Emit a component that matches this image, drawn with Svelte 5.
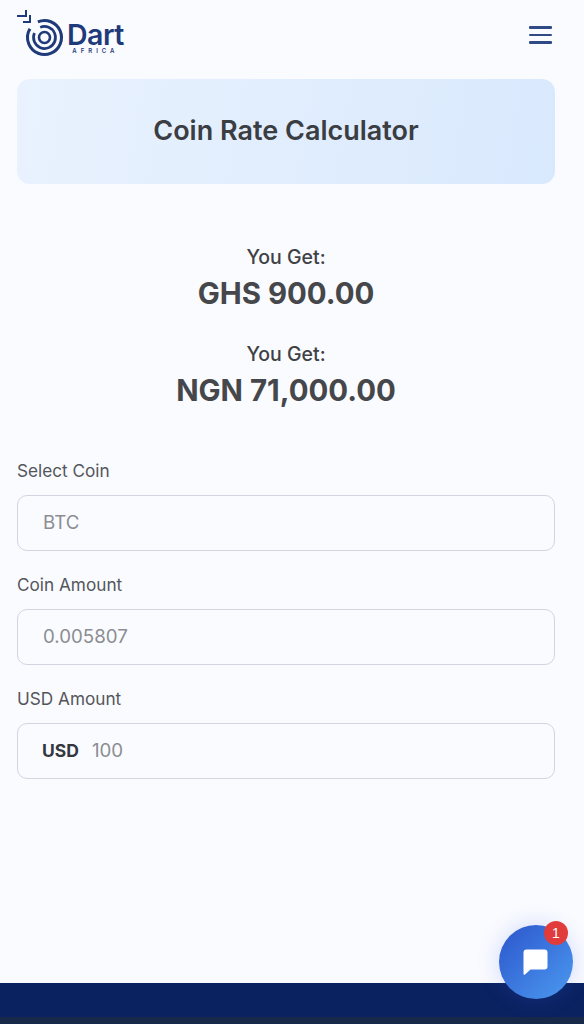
<script>
  let coin = "BTC";
  let amount = "0.005807";
  let usd = "100";
  const results = ["GHS 900.00", "NGN 71,000.00"];
</script>

<div class="page">
  <header>
    <div class="logo">
      <svg width="50" height="52" viewBox="0 0 50 52" fill="none" aria-hidden="true">
        <g stroke="#1f3a7a" fill="none">
          <path d="M0 7h9V1" stroke-width="2" />
          <path d="M6 13h7V6" stroke-width="2" />
          <circle cx="27.500" cy="28.500" r="17" stroke-width="3" pathLength="100" stroke-dasharray="90 10" transform="rotate(-113 27.500 28.500)" />
          <circle cx="27.500" cy="28.500" r="11" stroke-width="2.700" pathLength="100" stroke-dasharray="88 12" transform="rotate(-113 27.500 28.500)" />
          <circle cx="27.500" cy="28.500" r="5.500" stroke-width="2.600" />
        </g>
      </svg>
      <div class="wordmark">
        <span class="dart">Dart</span>
        <span class="africa">AFRICA</span>
      </div>
    </div>
    <button class="menu" aria-label="Menu">
      <span></span><span></span><span></span>
    </button>
  </header>

  <div class="banner"><h1>Coin Rate Calculator</h1></div>

  <section class="results">
    {#each results as r}
      <div class="result">
        <div class="get">You Get:</div>
        <div class="value">{r}</div>
      </div>
    {/each}
  </section>

  <form>
    <label>
      <span>Select Coin</span>
      <div class="field"><input value={coin} readonly /></div>
    </label>
    <label>
      <span>Coin Amount</span>
      <div class="field"><input value={amount} readonly /></div>
    </label>
    <label>
      <span>USD Amount</span>
      <div class="field"><b>USD</b><input value={usd} readonly /></div>
    </label>
  </form>

  <div class="spacer"></div>
  <footer></footer>

  <button class="chat" aria-label="Chat">
    <svg width="28" height="28" viewBox="0 0 28 28" aria-hidden="true">
      <path d="M4.500 1.500h18a3 3 0 0 1 3 3v14a3 3 0 0 1-3 3H8.500L3 26.500a1 1 0 0 1-1.500-.8V4.500a3 3 0 0 1 3-3z" fill="#fff" />
    </svg>
    <span class="badge">1</span>
  </button>
</div>

<style>
  :global(body) {
    margin: 0;
    background: #fafbff;
    font-family: Inter, "Liberation Sans", sans-serif;
  }

  .page {
    position: relative;
    height: 1024px;
    overflow: hidden;
    display: flex;
    flex-direction: column;
    color: #3f4146;
    background: #fafbff;
  }

  header {
    height: 79px;
    padding: 9px 32px 0 17px;
    box-sizing: border-box;
    display: flex;
    justify-content: space-between;
    align-items: flex-start;
  }

  .logo {
    display: flex;
    align-items: flex-start;
  }

  .wordmark {
    display: flex;
    flex-direction: column;
    align-items: center;
    margin-top: 13px;
    color: #1f3a7a;
  }

  .dart {
    font-size: 28.500px;
    font-weight: 600;
    line-height: 26px;
    letter-spacing: -0.5px;
  }

  .africa {
    font-size: 6px;
    font-weight: 600;
    line-height: 6px;
    letter-spacing: 4px;
  }

  .menu {
    margin-top: 17px;
    padding: 0;
    width: 23px;
    border: 0;
    background: none;
    display: flex;
    flex-direction: column;
    gap: 5px;
  }

  .menu span {
    height: 2.500px;
    background: #2f4a85;
    border-radius: 1px;
  }

  .banner {
    margin: 0 29px 0 17px;
    height: 105px;
    border-radius: 13px;
    background: linear-gradient(100deg, #e9f2fe, #d9e9fd);
    display: flex;
    align-items: center;
    justify-content: center;
  }

  h1 {
    margin: 0 0 2px;
    font-size: 27px;
    font-weight: 600;
    color: #3a3d42;
  }

  .results {
    padding-top: 60px;
    display: flex;
    flex-direction: column;
    gap: 27px;
    align-items: center;
    margin-right: 12px;
  }

  .result {
    text-align: center;
  }

  .get {
    font-size: 19.500px;
    font-weight: 500;
    line-height: 26px;
    margin-bottom: 4px;
  }

  .value {
    font-size: 29.400px;
    font-weight: 700;
    line-height: 40px;
    color: #45474b;
  }

  form {
    margin: 49px 29px 0 17px;
    display: flex;
    flex-direction: column;
    gap: 23px;
  }

  label {
    display: block;
  }

  label > span {
    display: block;
    font-size: 17.200px;
    line-height: 22px;
    margin-bottom: 13px;
    color: #54565b;
  }

  .field {
    height: 56px;
    box-sizing: border-box;
    border: 1.500px solid #d2d4e2;
    border-radius: 10px;
    padding: 0 25px 2px;
    display: flex;
    align-items: center;
    gap: 13px;
  }

  .field b {
    margin-left: -1px;
    font-size: 17.500px;
    font-weight: 700;
    color: #34373d;
  }

  input {
    flex: 1;
    min-width: 0;
    border: 0;
    outline: 0;
    padding: 0;
    background: none;
    font: inherit;
    font-size: 18.700px;
    color: #8b8d92;
  }

  .spacer {
    flex: 1;
  }

  footer {
    height: 41px;
    background: #0a2260;
    border-bottom: 7px solid #182848;
    box-sizing: border-box;
  }

  .chat {
    position: absolute;
    left: 499px;
    top: 925px;
    width: 74px;
    height: 74px;
    padding: 0;
    border: 0;
    border-radius: 50%;
    background: linear-gradient(135deg, #2c55cc, #4b9af0);
    box-shadow: 0 0 22px rgba(60, 90, 230, 0.22);
    display: flex;
    align-items: center;
    justify-content: center;
  }

  .badge {
    position: absolute;
    right: 5px;
    top: -4px;
    width: 24px;
    height: 24px;
    border-radius: 50%;
    background: #e23b3b;
    color: #fff;
    font-size: 14px;
    font-weight: 500;
    line-height: 24px;
    text-align: center;
  }
</style>
